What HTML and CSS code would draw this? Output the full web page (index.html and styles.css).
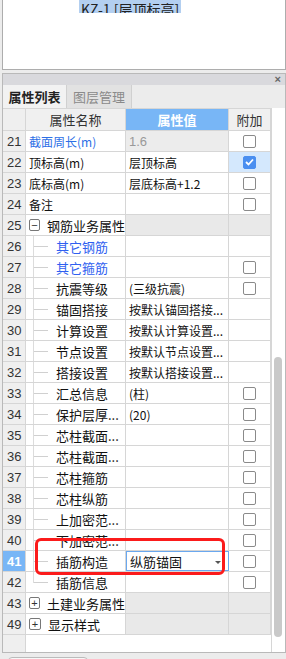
FILE: index.html
```html
<!DOCTYPE html>
<html lang="zh-CN">
<head>
    <meta charset="UTF-8">
    <link rel="stylesheet" href="styles.css">
    <title>属性列表</title>
</head>
<body>
    <div class="draw-panel">
        <span class="sel-label">KZ-1 [层顶标高]</span>
    </div>

    <div class="prop-panel">
        <div class="panel-head"><span class="close-x">×</span></div>
        <div class="tabs">
            <div class="tab active">属性列表</div>
            <div class="tab">图层管理</div>
        </div>

        <div class="grid-wrap">
            <div class="grid" id="grid">
                <div class="row head">
                    <div class="c num"></div>
                    <div class="c name center">属性名称</div>
                    <div class="c val center hl">属性值</div>
                    <div class="c extra center">附加</div>
                </div>
            </div>
            <div class="scroll"><div class="thumb"></div></div>
            <div class="mark"></div>
        </div>
    </div>
    <div class="bottom-btn"></div>

    <script>
        // 属性行: [序号, 名称, 值, 类型, 是否有附加框]
        const rows = [
            [21, '截面周长(m)', '1.6', 'lock', 1],
            [22, '顶标高(m)', '层顶标高', '', 2],
            [23, '底标高(m)', '层底标高+1.2', '', 1],
            [24, '备注', '', '', 1],
            [25, '钢筋业务属性', '', 'minus', 0],
            [26, '其它钢筋', '', 'leaf blue', 0],
            [27, '其它箍筋', '', 'leaf blue', 1],
            [28, '抗震等级', '(三级抗震)', 'leaf', 1],
            [29, '锚固搭接', '按默认锚固搭接...', 'leaf', 0],
            [30, '计算设置', '按默认计算设置...', 'leaf', 0],
            [31, '节点设置', '按默认节点设置...', 'leaf', 0],
            [32, '搭接设置', '按默认搭接设置...', 'leaf', 0],
            [33, '汇总信息', '(柱)', 'leaf', 1],
            [34, '保护层厚...', '(20)', 'leaf', 1],
            [35, '芯柱截面...', '', 'leaf', 1],
            [36, '芯柱截面...', '', 'leaf', 1],
            [37, '芯柱箍筋', '', 'leaf', 1],
            [38, '芯柱纵筋', '', 'leaf', 1],
            [39, '上加密范...', '', 'leaf', 1],
            [40, '下加密范...', '', 'leaf', 1],
            [41, '插筋构造', '纵筋锚固', 'leaf selected', 1],
            [42, '插筋信息', '', 'leaf last', 1],
            [43, '土建业务属性', '', 'plus', 0],
            [49, '显示样式', '', 'plus', 0]
        ];

        const grid = document.getElementById('grid');

        rows.forEach(([n, name, val, type, box]) => {
            const row = document.createElement('div');
            row.className = 'row ' + type;

            let nameHtml = name;
            if (type === 'minus' || type === 'plus') {
                nameHtml = `<span class="toggle">${type === 'minus' ? '−' : '+'}</span><span>${name}</span>`;
            } else if (type.startsWith('leaf')) {
                nameHtml = `<span class="branch"></span><span class="leaf-text">${name}</span>`;
            }

            let valHtml = val;
            if (type.includes('selected')) {
                valHtml = `${val}<span class="drop"></span>`;
            }

            let boxHtml = '';
            if (box === 1) boxHtml = '<span class="chk"></span>';
            if (box === 2) boxHtml = '<span class="chk on"><svg width="9" height="8" viewBox="0 0 9 8"><path d="M1 4 L3.5 6.5 L8 1.5" fill="none" stroke="#fff" stroke-width="1.8"/></svg></span>';

            row.innerHTML = `
                <div class="c num">${n}</div>
                <div class="c name">${nameHtml}</div>
                <div class="c val">${valHtml}</div>
                <div class="c extra${box === 2 ? ' checked' : ''}">${boxHtml}</div>`;
            grid.appendChild(row);
        });

        const filler = document.createElement('div');
        filler.className = 'row filler';
        filler.innerHTML = '<div class="c num"></div><div class="c rest"></div>';
        grid.appendChild(filler);
    </script>
</body>
</html>
```

FILE: styles.css
```css
* {
    box-sizing: border-box;
}

body {
    margin: 0;
    padding: 0 0 0 2px;
    background-color: #ececec;
    font-family: "Noto Sans CJK SC", "Liberation Sans", sans-serif;
    font-size: 12px;
    color: #111;
    width: 286px;
    height: 659px;
    overflow: hidden;
}

.draw-panel {
    width: 284px;
    height: 70px;
    background-color: #fff;
    border: 1px solid #adadad;
    border-top: none;
    padding-left: 76px;
}

.sel-label {
    display: inline-block;
    background-color: #b3cff0;
    color: #222;
    font-size: 14px;
    line-height: 18px;
    height: 13px;
    padding: 0 2px;
    margin-top: 0;
    overflow: hidden;
    position: relative;
    top: -5px;
    padding-top: 5px;
    height: 18px;
}

.prop-panel {
    margin-top: 3px;
    width: 284px;
    border: 1px solid #b9b9b9;
    background-color: #ececec;
}

.panel-head {
    height: 11px;
    background-color: #d9d9dd;
    display: flex;
    justify-content: flex-end;
    align-items: center;
    padding-right: 4px;
}

.close-x {
    font-family: "Liberation Sans", sans-serif;
    font-size: 11px;
    line-height: 11px;
    color: #666;
    font-weight: bold;
}

.tabs {
    display: flex;
    height: 23px;
    background-color: #ececec;
}

.tab {
    width: 65px;
    display: flex;
    align-items: center;
    justify-content: center;
    font-size: 13px;
    color: #8a8a8a;
    background-color: #e2e2e2;
    border-right: 1px solid #d0d0d0;
}

.tab.active {
    background-color: #f2f2f2;
    color: #222;
    font-weight: bold;
    width: 64px;
}

.grid-wrap {
    display: flex;
    position: relative;
    background-color: #fff;
}

.grid {
    width: 268px;
    border-top: 1px solid #d6d6d6;
}

.row {
    display: grid;
    grid-template-columns: 23px 100px 103px 42px;
    height: 21px;
    border-bottom: 1px solid #d6d6d6;
}

.c {
    border-right: 1px solid #d6d6d6;
    display: flex;
    align-items: center;
    white-space: nowrap;
    overflow: hidden;
    padding-left: 3px;
}

.center {
    justify-content: center;
    padding-left: 0;
}

.num {
    background-color: #efefef;
    font-family: "Liberation Sans", sans-serif;
    font-size: 13px;
    color: #333;
    padding-left: 4px;
}

.head {
    height: 22px;
    background-color: #f0f0f0;
}

.head .c {
    font-size: 13px;
    color: #333;
}

.head .hl {
    background-color: #78b6f6;
    color: #fff;
    font-weight: bold;
}

.lock .name {
    color: #2d6fe6;
}

.lock .val {
    background-color: #ececec;
    color: #999;
    font-family: "Liberation Sans", sans-serif;
    font-size: 13px;
}

.extra {
    justify-content: center;
    padding-left: 0;
}

.extra.checked {
    background-color: #d4e8fd;
}

.chk {
    width: 13px;
    height: 13px;
    border: 1px solid #8a8a8a;
    border-radius: 2px;
    background-color: #fff;
}

.chk.on {
    background-color: #4b8ff0;
    border-color: #4b8ff0;
    display: flex;
    align-items: center;
    justify-content: center;
}

.minus .val,
.minus .extra,
.plus .val,
.plus .extra {
    background-color: #e9e9e9;
}

.toggle {
    width: 12px;
    height: 12px;
    border: 1px solid #777;
    border-radius: 2px;
    font-family: "Liberation Sans", sans-serif;
    font-size: 11px;
    line-height: 10px;
    display: flex;
    align-items: center;
    justify-content: center;
    margin-right: 7px;
    color: #333;
}

.minus .name span:last-child,
.plus .name span:last-child {
    font-size: 13px;
}

.leaf .name {
    position: relative;
    padding-left: 7px;
}

.branch {
    width: 14px;
    height: 21px;
    border-left: 1px solid #dcdcdc;
    position: relative;
    margin-right: 9px;
    align-self: stretch;
}

.branch::after {
    content: "";
    position: absolute;
    left: 0;
    top: 10px;
    width: 14px;
    border-top: 1px solid #d0d0d0;
}

.last .branch {
    height: 11px;
    align-self: flex-start;
}

.leaf-text {
    font-size: 13px;
}

.blue .leaf-text {
    color: #2f5ff0;
}

.val {
    font-size: 12px;
}

.selected .num {
    background-color: #78b6f6;
    color: #fff;
    font-weight: bold;
}

.selected .val {
    border: 1px solid #6aa8ef;
    position: relative;
    font-size: 13px;
}

.drop {
    position: absolute;
    right: 7px;
    top: 9px;
    border-left: 3px solid transparent;
    border-right: 3px solid transparent;
    border-top: 3px solid #555;
}

.filler {
    grid-template-columns: 23px 245px;
    height: 17px;
    border-bottom: none;
}

.filler .rest {
    border-right: none;
}

.scroll {
    width: 14px;
    background-color: #fff;
    border-left: 1px solid #d6d6d6;
    position: relative;
}

.thumb {
    position: absolute;
    left: 2px;
    top: 249px;
    width: 8px;
    height: 280px;
    background-color: #c9c9c9;
    border-radius: 4px;
}

.mark {
    position: absolute;
    left: 32px;
    top: 430px;
    width: 190px;
    height: 37px;
    border: 3px solid #fb1b1b;
    border-radius: 6px;
}

.bottom-btn {
    margin: 4px 0 0 6px;
    width: 80px;
    height: 12px;
    border: 1px solid #bbb;
    border-radius: 4px;
    background-color: #f7f7f7;
}
```
